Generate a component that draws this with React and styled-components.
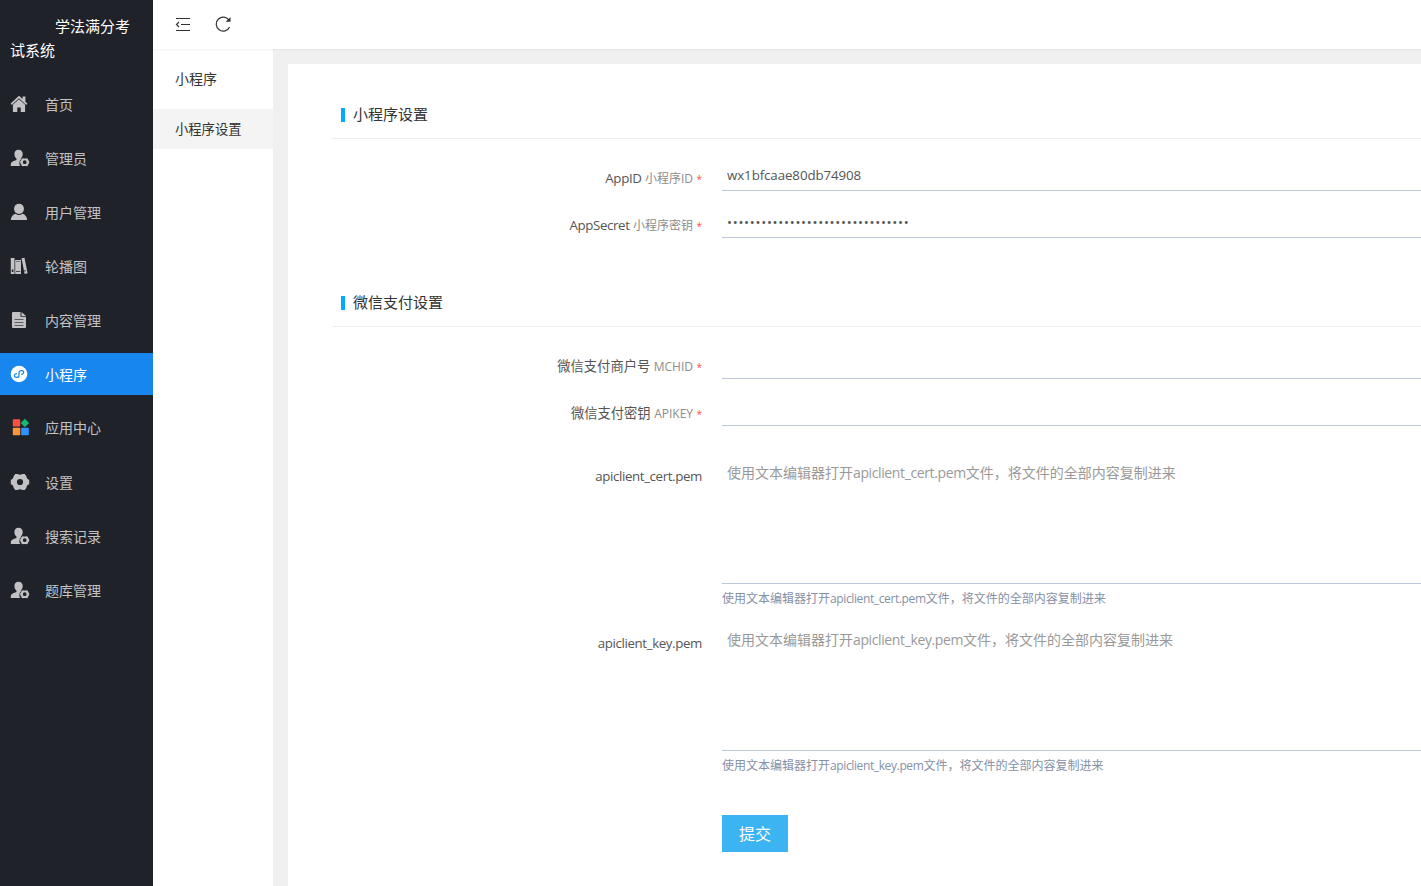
import React from 'react';
import styled, { createGlobalStyle } from 'styled-components';

const GlobalStyle = createGlobalStyle`
  * {
    box-sizing: border-box;
  }

  body {
    margin: 0;
    overflow: hidden;
    font-family: 'Open Sans', 'Noto Sans CJK SC', sans-serif;
    font-size: 14px;
    color: #333;
    background: #f0f0f0;
  }
`;

const Layout = styled.div`
  display: flex;
  height: 100vh;
`;

const Sidebar = styled.aside`
  width: 153px;
  flex-shrink: 0;
  background: #20222a;
`;

const SiteTitle = styled.h1`
  margin: 0;
  padding: 14px 10px 0;
  height: 83px;
  font-size: 15px;
  font-weight: 400;
  line-height: 24px;
  text-indent: 45px;
  color: #fff;
`;

const Menu = styled.nav`
  display: flex;
  flex-direction: column;
  gap: 12px;
`;

const MenuItem = styled.a`
  display: flex;
  align-items: center;
  height: 42px;
  padding-left: 10px;
  color: ${({ $active }) => ($active ? '#fff' : '#c2c2c4')};
  background: ${({ $active }) => ($active ? '#1787ef' : 'transparent')};

  &:nth-child(7) {
    padding-bottom: 2px;
  }

  svg {
    width: 20px;
    height: 18px;
    margin-right: 15px;
    flex-shrink: 0;
  }
`;

const Page = styled.div`
  flex: 1;
  min-width: 0;
  display: flex;
  flex-direction: column;
`;

const Header = styled.header`
  display: flex;
  align-items: center;
  gap: 20px;
  height: 49px;
  flex-shrink: 0;
  padding: 0 0 2px 20px;
  background: #fff;
  box-shadow: 0 1px 2px rgba(0, 0, 0, 0.06);
  z-index: 1;

  svg {
    width: 20px;
    height: 20px;
  }
`;

const Body = styled.div`
  flex: 1;
  display: flex;
  min-height: 0;
`;

const SubNav = styled.div`
  width: 120px;
  flex-shrink: 0;
  background: #fff;
`;

const SubNavTitle = styled.div`
  height: 60px;
  padding-left: 22px;
  line-height: 60px;
`;

const SubNavItem = styled.div`
  height: 40px;
  padding-left: 22px;
  font-size: 13.3px;
  line-height: 40px;
  background: #f4f4f4;
`;

const Main = styled.main`
  flex: 1;
  min-width: 0;
  padding: 15px 0 0 15px;
`;

const Card = styled.div`
  height: 100%;
  padding: 27px 0 0 44px;
  background: #fff;
`;

const SectionTitle = styled.h2`
  display: flex;
  align-items: center;
  height: 48px;
  margin: 0 0 14px;
  padding-left: 9px;
  font-size: 15px;
  font-weight: 400;
  border-bottom: 1px solid #eeeef4;

  &:before {
    content: '';
    width: 4px;
    height: 14px;
    margin-right: 8px;
    background: #00aaff;
  }

  span {
    padding-bottom: 2px;
  }
`;

const Row = styled.div`
  display: flex;
  height: ${({ $height }) => $height || 47}px;
`;

const Label = styled.label`
  width: 370px;
  margin-right: 20px;
  padding-top: ${({ $top }) => $top || 15}px;
  flex-shrink: 0;
  font-size: 13.3px;
  line-height: 20px;
  text-align: right;
  white-space: nowrap;
  color: #555;

  small {
    font-size: 12px;
    color: #8c8c8c;
  }

  em {
    font-size: 10px;
    font-style: normal;
    color: #ff4a4a;
  }
`;

const Field = styled.div`
  flex: 1;
  min-width: 0;
`;

const Input = styled.input`
  display: block;
  width: 100%;
  height: 38px;
  padding: 6px 5px 0;
  border: 0;
  border-bottom: 1px solid #bcc6d8;
  outline: 0;
  font-family: inherit;
  font-size: 13.3px;
  letter-spacing: ${({ type }) => (type === 'password' ? '0.7px' : '-0.08px')};
  color: #555;
`;

const Textarea = styled.div`
  height: 129px;
  padding: 8px 5px;
  border-bottom: 1px solid #bcc6d8;
  line-height: 20px;
  color: #999;
`;

const Help = styled.div`
  margin-top: 5px;
  font-size: 12px;
  line-height: 20px;
  color: #8590a6;
`;

const Latin = styled.span`
  letter-spacing: -0.38px;
`;

const Submit = styled.button`
  width: 66px;
  height: 37px;
  margin-left: 390px;
  padding: 0 0 2px;
  border: 0;
  font-family: inherit;
  font-size: 16px;
  color: #fff;
  background: #3db4f2;
`;

const HomeIcon = () => (
  <svg viewBox="0 0 20 18" fill="currentColor">
    <path d="M9 .8.6 8.600l1.200 1.300L9 3.300l7.200 6.600 1.200-1.300-2-1.900V1.500h-2.800v2.600z" />
    <path d="M9 4.300 2.900 9.800V17h4.400v-4.500h3.400V17h4.400V9.800z" />
  </svg>
);

const AdminIcon = () => (
  <svg viewBox="0 0 20 18" fill="currentColor">
    <path d="M8.500.8C5.800.8 4.400 2.700 4.400 5c0 2 .9 3.500 2.100 4.500v1.200C5.300 11.800 1 12 .8 15.200V17h9.400a5.700 5.700 0 0 1 .8-6.700l-.3-.6c1.200-1 2-2.500 2-4.700 0-2.300-1.500-4.200-4.200-4.200z" />
    <path fillRule="evenodd" d="m12.600 9.200 1.300.3h1.600l1.300-.3 1.200.8.2 1.200 1 1.100v1.800l-1 1.100-.2 1.200-1.200.8-1.300-.3h-1.600l-1.300.3-1.200-.8-.2-1.200-1-1.100v-1.800l1-1.100.2-1.200zm2.100 2.100a1.900 1.900 0 1 0 0 3.800 1.900 1.900 0 0 0 0-3.800z" />
  </svg>
);

const UserIcon = () => (
  <svg viewBox="0 0 20 18" fill="currentColor">
    <ellipse cx="9" cy="5.800" rx="5" ry="5.100" />
    <path d="M.8 17c.2-3.500 2-5.300 4.700-6.200a6 6 0 0 0 7 0c2.700.9 4.500 2.700 4.700 6.200z" />
  </svg>
);

const BooksIcon = () => (
  <svg viewBox="0 0 20 18" fill="currentColor">
    <path fillRule="evenodd" d="M.8 1h3.700v16H.8zm1 11.500V15h1.600v-2.500zM5.200 3H11v14H5.200zm.8 1.400v.7h4.200v-.7zm0 9.800v.7h4.200v-.7zM11.500 1.300l3-.6 3.100 15.600-3 .7zm2.700 12 .3 1.300 1.200-.3-.3-1.300z" />
  </svg>
);

const FileIcon = () => (
  <svg viewBox="0 0 20 18">
    <path fill="currentColor" d="M3 1h7.500v4.800H16V16a1 1 0 0 1-1 1H3a1 1 0 0 1-1-1V2a1 1 0 0 1 1-1zm8.500 0L16 5h-4.500z" />
    <path stroke="#5b5c62" d="M4.500 8.500h9M4.500 11.500h9M4.500 14.500h9" />
  </svg>
);

const MiniAppIcon = () => (
  <svg viewBox="0 0 20 18" fill="none">
    <circle cx="9" cy="9" r="8.300" fill="#fff" />
    <path
      stroke="#1787ef"
      strokeWidth="1.200"
      strokeLinecap="round"
      d="M6.400 8.600c-1.300.3-2.100 1-2.100 2 0 1.100 1 1.800 2.200 1.800S9 11.600 9 10.400V7.600c0-1.200 1.200-2 2.400-2s2.300.7 2.300 1.800-.9 1.700-2.100 2"
    />
  </svg>
);

const AppsIcon = () => (
  <svg viewBox="0 0 20 18">
    <rect x="2.800" y="1.200" width="7.400" height="7.400" rx=".8" fill="#ff4f43" />
    <rect x="2.800" y="9.800" width="7.400" height="7.400" rx=".8" fill="#ff963c" />
    <rect x="11.200" y="9.800" width="7.600" height="7.400" rx=".8" fill="#2c94ff" />
    <path fill="#16b777" d="m14.900.8 4.200 4.200-4.200 4.200L10.700 5z" />
  </svg>
);

const GearIcon = () => (
  <svg viewBox="0 0 20 18" fill="currentColor">
    <path
      fillRule="evenodd"
      d="M5.200 1h2.600c1 1 3.400 1 4.400 0h2.600l1.700 2.600c0 1.500.8 2.600 2.700 3.200v4.400c-1.900.6-2.700 1.700-2.700 3.200L14.800 17h-2.600c-1-1-3.400-1-4.400 0H5.200l-1.700-2.600c0-1.500-.8-2.600-2.700-3.200V6.800c1.900-.6 2.700-1.700 2.700-3.200zM10 5.900a3.100 3.100 0 1 0 0 6.200 3.100 3.100 0 0 0 0-6.200z"
    />
  </svg>
);

const FoldIcon = () => (
  <svg viewBox="0 0 20 20" fill="none" stroke="#333" strokeWidth="1.200">
    <path d="M3 4.500h14M8 10.500h9M3 16.500h14M6 8l-2.500 2.500L6 13" />
  </svg>
);

const RefreshIcon = () => (
  <svg viewBox="0 0 20 20" fill="none" stroke="#333" strokeWidth="1.200">
    <path d="M16.200 6.500A7 7 0 1 0 16.600 13" />
    <path fill="#333" stroke="none" d="M17.500 3v4.800h-4.800z" />
  </svg>
);

const menuItems = [
  { name: '首页', icon: HomeIcon },
  { name: '管理员', icon: AdminIcon },
  { name: '用户管理', icon: UserIcon },
  { name: '轮播图', icon: BooksIcon },
  { name: '内容管理', icon: FileIcon },
  { name: '小程序', icon: MiniAppIcon, active: true },
  { name: '应用中心', icon: AppsIcon },
  { name: '设置', icon: GearIcon },
  { name: '搜索记录', icon: AdminIcon },
  { name: '题库管理', icon: AdminIcon }
];

const PemHint = ({ file }) => (
  <>
    使用文本编辑器打开<Latin>{file}</Latin>文件，将文件的全部内容复制进来
  </>
);

const InputRow = ({ label, note, height, ...rest }) => (
  <Row $height={height}>
    <Label>
      {label} <small>{note}</small> <em>*</em>
    </Label>
    <Field>
      <Input {...rest} />
    </Field>
  </Row>
);

const PemRow = ({ file, height }) => (
  <Row $height={height}>
    <Label $top={11}>
      <Latin>{file}</Latin>
    </Label>
    <Field>
      <Textarea>
        <PemHint file={file} />
      </Textarea>
      <Help>
        <PemHint file={file} />
      </Help>
    </Field>
  </Row>
);

const App = () => {
  return (
    <Layout>
      <GlobalStyle />
      <Sidebar>
        <SiteTitle>学法满分考试系统</SiteTitle>
        <Menu>
          {menuItems.map(({ name, icon: Icon, active }) => (
            <MenuItem key={name} $active={active}>
              <Icon />
              {name}
            </MenuItem>
          ))}
        </Menu>
      </Sidebar>
      <Page>
        <Header>
          <FoldIcon />
          <RefreshIcon />
        </Header>
        <Body>
          <SubNav>
            <SubNavTitle>小程序</SubNavTitle>
            <SubNavItem>小程序设置</SubNavItem>
          </SubNav>
          <Main>
            <Card>
              <SectionTitle>
                <span>小程序设置</span>
              </SectionTitle>
              <InputRow
                label={<Latin>AppID</Latin>}
                note="小程序ID"
                defaultValue="wx1bfcaae80db74908"
              />
              <InputRow
                label={<Latin>AppSecret</Latin>}
                note="小程序密钥"
                type="password"
                defaultValue="00000000000000000000000000000000"
                height={79}
              />
              <SectionTitle>
                <span>微信支付设置</span>
              </SectionTitle>
              <InputRow label="微信支付商户号" note="MCHID" />
              <InputRow label="微信支付密钥" note="APIKEY" height={67} />
              <PemRow file="apiclient_cert.pem" height={167} />
              <PemRow file="apiclient_key.pem" height={193} />
              <Submit>提交</Submit>
            </Card>
          </Main>
        </Body>
      </Page>
    </Layout>
  );
};

export default App;
